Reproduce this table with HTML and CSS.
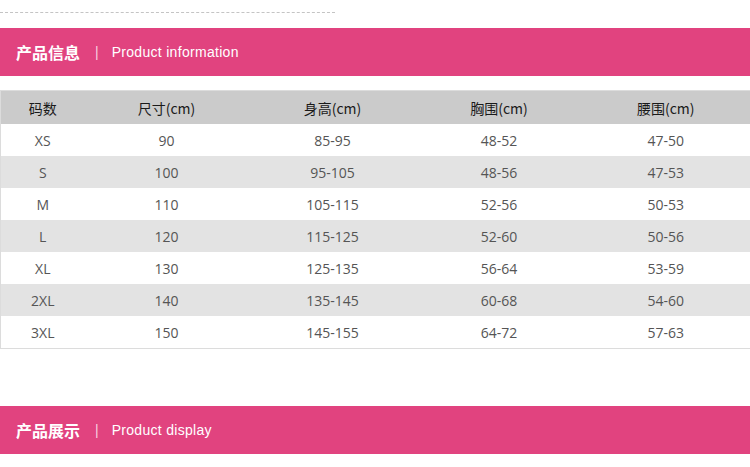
FILE: index.html
```html
<!DOCTYPE html>
<html lang="zh-CN">
<head>
<meta charset="utf-8">
<title>产品信息</title>
<link rel="stylesheet" href="styles.css">
</head>
<body>
<div class="page">
  <div class="dash"></div>
  <div class="bar">
    <span class="bar-cn">产品信息</span>
    <span class="bar-sep">|</span>
    <span class="bar-en">Product information</span>
  </div>
  <table class="size-table">
    <colgroup>
      <col class="c1"><col class="c2"><col class="c3"><col class="c4"><col class="c5">
    </colgroup>
    <thead>
      <tr><th>码数</th><th>尺寸(cm)</th><th>身高(cm)</th><th>胸围(cm)</th><th>腰围(cm)</th></tr>
    </thead>
    <tbody>
      <tr><td>XS</td><td>90</td><td>85-95</td><td>48-52</td><td>47-50</td></tr>
      <tr><td>S</td><td>100</td><td>95-105</td><td>48-56</td><td>47-53</td></tr>
      <tr><td>M</td><td>110</td><td>105-115</td><td>52-56</td><td>50-53</td></tr>
      <tr><td>L</td><td>120</td><td>115-125</td><td>52-60</td><td>50-56</td></tr>
      <tr><td>XL</td><td>130</td><td>125-135</td><td>56-64</td><td>53-59</td></tr>
      <tr><td>2XL</td><td>140</td><td>135-145</td><td>60-68</td><td>54-60</td></tr>
      <tr><td>3XL</td><td>150</td><td>145-155</td><td>64-72</td><td>57-63</td></tr>
    </tbody>
  </table>
  <div class="bar bar-second">
    <span class="bar-cn">产品展示</span>
    <span class="bar-sep">|</span>
    <span class="bar-en">Product display</span>
  </div>
</div>
</body>
</html>
```
FILE: styles.css
```css
html, body {
  margin: 0;
  padding: 0;
  background: #ffffff;
}
.page {
  width: 750px;
  padding-top: 12px;
}
.dash {
  width: 335px;
  border-top: 1px dashed #c4c4c4;
  margin-bottom: 15px;
}
.bar {
  height: 48px;
  background: #e1437f;
  display: flex;
  align-items: center;
  padding-left: 16px;
  color: #ffffff;
}
.bar-cn {
  font-family: "Noto Sans CJK SC", sans-serif;
  font-weight: 700;
  font-size: 16px;
  line-height: 20px;
}
.bar-sep {
  font-family: "Liberation Sans", Arial, sans-serif;
  font-size: 14px;
  color: #f6d2df;
  margin-left: 15px;
  margin-right: 13px;
}
.bar-en {
  font-family: "Liberation Sans", Arial, sans-serif;
  font-size: 14px;
  letter-spacing: 0.3px;
}
.size-table {
  margin-top: 14px;
  width: 750px;
  border-collapse: collapse;
  table-layout: fixed;
  border: 1px solid #dcdcdc;
  font-family: "Open Sans", "Noto Sans CJK SC", sans-serif;
  font-size: 14px;
}
.c1 { width: 84px; }
.c2 { width: 164px; }
.c3 { width: 168px; }
.c4 { width: 165px; }
.c5 { width: 169px; }
.size-table th,
.size-table td {
  height: 32px;
  padding: 0;
  text-align: center;
  vertical-align: middle;
}
.size-table th {
  background: #cbcbcb;
  color: #1a1a1a;
  font-weight: 400;
  font-family: "Noto Sans CJK SC", "Open Sans", sans-serif;
  height: 33px;
}
.size-table td {
  color: #555555;
}
.size-table tbody tr:nth-child(even) td {
  background: #e3e3e3;
}
.bar-second {
  margin-top: 57px;
}
```
